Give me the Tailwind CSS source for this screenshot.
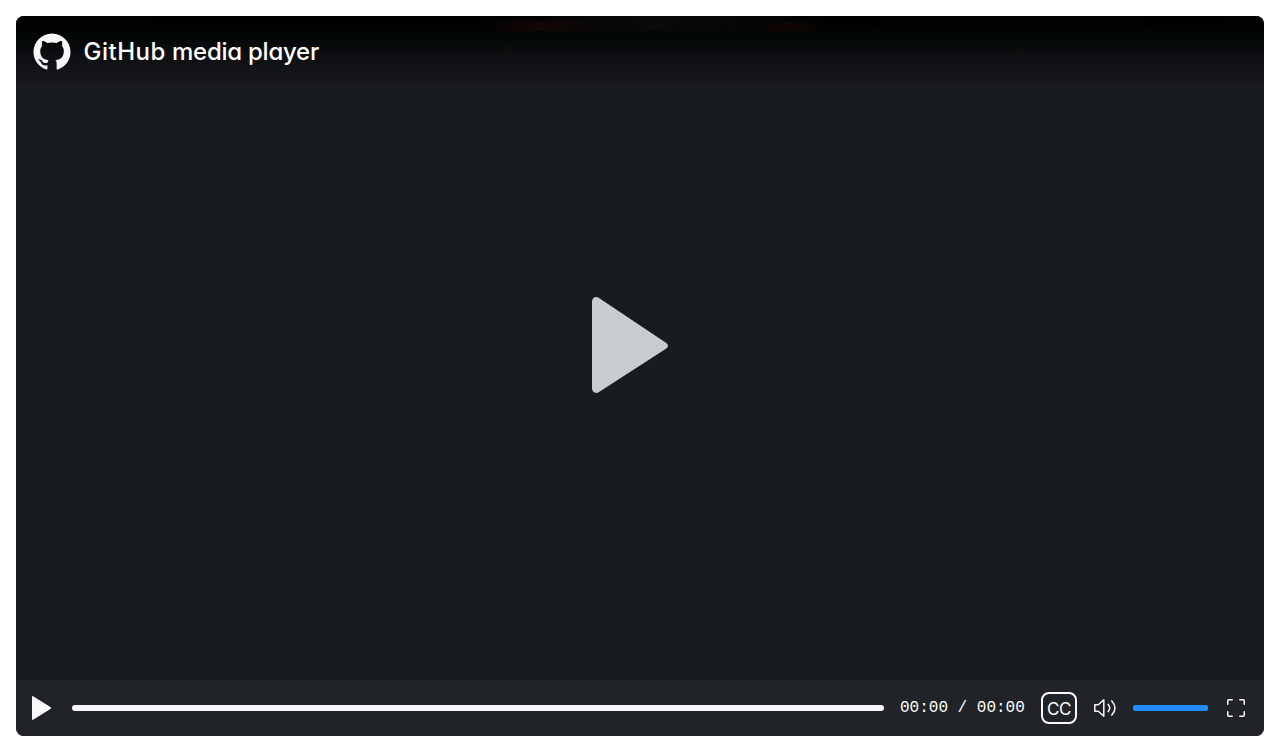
<!DOCTYPE html>
<html lang="en">
<head>
<meta charset="utf-8">
<title>GitHub media player</title>
<script src="https://cdn.jsdelivr.net/npm/@tailwindcss/browser@4"></script>
</head>
<body class="bg-white">
<main class="h-[752px] p-4">
  <section class="flex h-[720px] flex-col overflow-hidden rounded-lg bg-[#181b1f] text-white">
    <header class="relative flex h-[72px] shrink-0 items-center gap-3 bg-gradient-to-b from-[#000202] via-[#0d0f11] via-55% to-[#181b1f] px-4">
      <!-- sliver of the poster image behind the title -->
      <div class="absolute left-[34px] top-0 h-[15px] w-[1180px] bg-black/60 [clip-path:polygon(0_0,100%_0,100%_100%,1105px_100%,1085px_0,840px_0,820px_100%,90px_100%,105px_0,0_0)]"></div>
      <div class="absolute left-[455px] top-0 h-[15px] w-[370px] bg-gradient-to-r from-transparent via-[#0b090a] to-transparent"></div>
      <div class="absolute left-[460px] top-[5px] h-[10px] w-[130px] bg-gradient-to-r from-transparent via-[#2b0b06]/40 to-transparent"></div>
      <div class="absolute left-[735px] top-[7px] h-[8px] w-[80px] bg-gradient-to-r from-transparent via-[#2b0805]/40 to-transparent"></div>
      <svg class="relative size-10" viewBox="-0.649 -0.649 17.297 17.297" fill="#f6f8fa"><path d="M8 0c4.42 0 8 3.58 8 8a8.013 8.013 0 0 1-5.45 7.59c-.4.08-.55-.17-.55-.38 0-.27.01-1.13.01-2.2 0-.75-.25-1.23-.54-1.48 1.78-.2 3.65-.88 3.65-3.95 0-.88-.31-1.59-.82-2.15.08-.2.36-1.02-.08-2.12 0 0-.67-.22-2.2.82-.64-.18-1.32-.27-2-.27-.68 0-1.36.09-2 .27-1.53-1.03-2.2-.82-2.2-.82-.44 1.1-.16 1.92-.08 2.12-.51.56-.82 1.28-.82 2.15 0 3.06 1.86 3.75 3.64 3.95-.23.2-.44.55-.51 1.07-.46.21-1.61.55-2.33-.66-.15-.24-.6-.83-1.23-.82-.67.01-.27.38.01.53.34.19.73.9.82 1.13.16.45.68 1.31 2.69.94 0 .67.01 1.3.01 1.49 0 .21-.15.45-.55.38A7.995 7.995 0 0 1 0 8c0-4.42 3.58-8 8-8Z"/></svg>
      <h1 class="relative -ml-[0.5px] whitespace-nowrap font-['Inter',sans-serif] text-[24px] font-medium leading-8 tracking-[-0.25px] [font-feature-settings:'cv11']"><span class="tracking-[0.5px]">GitHub</span> media player</h1>
    </header>
    <div class="flex min-h-0 flex-1 items-center justify-center pr-5 pb-[78px]">
      <svg class="h-24 w-[76px]" viewBox="0 0 76 96" fill="#c8ccce"><path d="M0 4.5V91.5C0 95 3.8 97.2 7 95L74 51.8Q78 48.8 74 45.8L7 1C3.8-1.2 0 1 0 4.5Z"/></svg>
    </div>
    <footer class="flex h-14 shrink-0 items-center bg-[#202327] px-4">
      <svg class="h-6 w-[19px]" viewBox="0 0 19 24" fill="#f6f8fa"><path d="M0 1V23Q0 24.5 1.5 23.6L18.4 12.9Q19.6 12 18.4 11.1L1.5.4Q0-.5 0 1Z"/></svg>
      <div class="ml-[21px] h-1.5 w-[812px] rounded-[3px] bg-[#f6f8fa]"></div>
      <span class="ml-4 mb-px w-[125px] whitespace-pre font-['Liberation_Mono',monospace] text-base leading-6">00:00 / 00:00</span>
      <span class="ml-4 flex h-8 w-9 items-center justify-center rounded-lg border-2 border-[#f6f8fa] pt-0.5 font-['Inter',sans-serif] text-[17px] leading-6 tracking-[-0.5px]">CC</span>
      <svg class="ml-4 size-6" viewBox="0 0 24 24" fill="none" stroke="#f6f8fa" stroke-width="1.5" stroke-linejoin="round" stroke-linecap="round"><path d="M1.8 8.7H5.3L10.8 3.7V20.3L5.3 15.3H1.8Z"/><path d="M15.2 8.4Q18.3 12 15.2 15.6M18.8 4.9Q25.2 12 18.8 19.1"/></svg>
      <div class="ml-4 h-1.5 w-[75px] rounded-[2px] bg-[#218bff]"></div>
      <svg class="ml-4 size-6" viewBox="0 0 24 24" fill="none" stroke="#f6f8fa" stroke-width="1.5" stroke-linecap="round"><path d="M3.75 8.2V4.75Q3.75 3.75 4.75 3.75H8.2M15.8 3.75H19.25Q20.25 3.75 20.25 4.75V8.2M20.25 15.8V19.25Q20.25 20.25 19.25 20.25H15.8M8.2 20.25H4.75Q3.75 20.25 3.75 19.25V15.8"/></svg>
    </footer>
  </section>
</main>
</body>
</html>
